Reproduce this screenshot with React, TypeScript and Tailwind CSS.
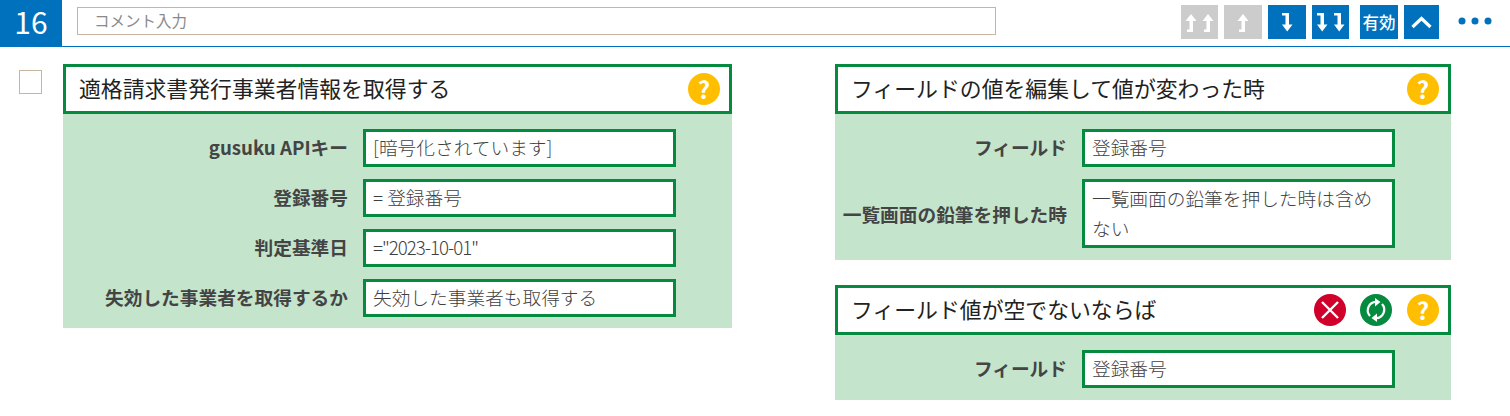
import React from 'react';

const FONT = "font-['Noto_Sans_CJK_JP','Noto_Sans',sans-serif]";

const UpArrow = ({ x = 0 }: { x?: number }) => (
  <path transform={`translate(${x} 0)`} fill="#fff" d="M6 1 L11.5 8 H8 V19 H2 V16.5 H4.5 V8 H0.5 Z" />
);

const DownArrow = ({ x = 0 }: { x?: number }) => (
  <path transform={`translate(${x} 0)`} fill="#fff" d="M0 0 H7 V11.5 H10.5 L5.2 18.5 L0 11.5 H3.5 V2.5 H0 Z" />
);

const ToolButton = ({ w, off, ml, children }: { w: string; off?: boolean; ml: string; children: React.ReactNode }) => (
  <div className={`flex h-[34px] items-center justify-center ${w} ${ml} ${off ? 'bg-[#cccccc]' : 'bg-[#0071bc]'}`}>
    {children}
  </div>
);

const Help = () => (
  <div className="flex h-8 w-8 items-center justify-center rounded-full bg-[#ffbf00] text-[24px] leading-none font-bold text-white">?</div>
);

const Field = ({ label, value, tall, labelW }: { label: string; value: React.ReactNode; tall?: boolean; labelW: string }) => (
  <div className="flex items-center">
    <div className={`shrink-0 text-right text-[18.7px] leading-[28px] font-bold text-[#444444] ${labelW} ${tall ? '' : 'pb-[2px]'}`}>{label}</div>
    <div
      className={`ml-[15px] w-[313px] border-[3px] border-[#068a3f] bg-white pr-2 pl-[7px] text-[18.7px] font-light text-[#3f3f3f] ${tall ? 'h-[69px] pt-px leading-[30px]' : 'h-[38px] leading-[30px]'}`}
    >
      {value}
    </div>
  </div>
);

const CardHeader = ({ title, children }: { title: string; children: React.ReactNode }) => (
  <div className="flex h-[50px] items-center justify-between border-[3px] border-[#068a3f] bg-white pr-[9px] pl-[13px]">
    <div className="pb-[2px] text-[21.85px] text-[#222222]">{title}</div>
    <div className="flex items-center">{children}</div>
  </div>
);

export default function App() {
  return (
    <div className={`h-[416px] w-[1510px] overflow-hidden bg-white ${FONT}`}>
      <header className="flex h-[47px] items-start border-b border-[#0071bc]">
        <div className="flex h-[46px] w-[62px] items-center justify-center bg-[#0071bc] pb-[3px] text-[30px] text-white">16</div>
        <div className="mt-[7px] ml-[15px] flex h-[28px] w-[919px] items-center border border-[#c8b59f] pb-px pl-[16px] text-[15.5px] text-[#8a8a8a]">コメント入力</div>
        <div className="mt-[5px] ml-[185px] flex items-center">
          <ToolButton w="w-[37px]" ml="ml-0" off>
            <svg width="29" height="19" viewBox="0 0 29 19"><UpArrow /><UpArrow x={17} /></svg>
          </ToolButton>
          <ToolButton w="w-[38px]" ml="ml-[6px]" off>
            <svg width="12" height="19" viewBox="0 0 12 19"><UpArrow /></svg>
          </ToolButton>
          <ToolButton w="w-[38px]" ml="ml-[6px]">
            <svg width="11" height="19" viewBox="0 0 11 19"><DownArrow /></svg>
          </ToolButton>
          <ToolButton w="w-[37px]" ml="ml-[6px]">
            <svg width="28" height="19" viewBox="0 0 28 19"><DownArrow /><DownArrow x={17} /></svg>
          </ToolButton>
          <ToolButton w="w-[38px]" ml="ml-[11px]">
            <span className="text-[16.5px] font-medium whitespace-nowrap text-white">有効</span>
          </ToolButton>
          <ToolButton w="w-[35px]" ml="ml-[6px]">
            <svg width="21" height="13" viewBox="0 0 21 13">
              <path d="M1.5 11 L10.5 2.5 L19.5 11" fill="none" stroke="#fff" strokeWidth="3.2" />
            </svg>
          </ToolButton>
          <svg className="mb-[2px] ml-[19px]" width="34" height="8" viewBox="0 0 34 8">
            <circle cx="4" cy="4" r="3.5" fill="#0071bc" />
            <circle cx="17" cy="4" r="3.5" fill="#0071bc" />
            <circle cx="30" cy="4" r="3.5" fill="#0071bc" />
          </svg>
        </div>
      </header>

      <main className="flex pt-[17px]">
        <div className="mt-[6px] ml-[19px] h-[24px] w-[23px] border border-[#c8b59f] bg-white" />
        <section className="ml-[21px] w-[669px]">
          <CardHeader title="適格請求書発行事業者情報を取得する">
            <Help />
          </CardHeader>
          <div className="flex flex-col gap-[12px] bg-[#c4e4cc] pt-[15px] pb-[11px]">
            <Field labelW="w-[285px]" label="gusuku APIキー" value="[暗号化されています]" />
            <Field labelW="w-[285px]" label="登録番号" value="= 登録番号" />
            <Field labelW="w-[285px]" label="判定基準日" value={<span className="tracking-[-1px]">="2023-10-01"</span>} />
            <Field labelW="w-[285px]" label="失効した事業者を取得するか" value="失効した事業者も取得する" />
          </div>
        </section>

        <div className="ml-[103px] flex w-[616px] flex-col gap-[25px]">
          <section>
            <CardHeader title="フィールドの値を編集して値が変わった時">
              <Help />
            </CardHeader>
            <div className="flex flex-col gap-[12px] bg-[#c4e4cc] pt-[15px] pb-[12px]">
              <Field labelW="w-[232px]" label="フィールド" value="登録番号" />
              <Field labelW="w-[232px]" label="一覧画面の鉛筆を押した時" value="一覧画面の鉛筆を押した時は含めない" tall />
            </div>
          </section>
          <section>
            <CardHeader title="フィールド値が空でないならば">
              <div className="flex h-8 w-8 items-center justify-center rounded-full bg-[#d0002a]">
                <svg width="20" height="20" viewBox="0 0 20 20">
                  <path d="M2 2 L18 18 M18 2 L2 18" stroke="#fff" strokeWidth="2.4" />
                </svg>
              </div>
              <div className="ml-[14px] flex h-8 w-8 items-center justify-center rounded-full bg-[#068a3f]">
                <svg width="22" height="24" viewBox="0 0 22 24" fill="none">
                  <path d="M5 18 A8.5 8.5 0 0 1 11 3.8" stroke="#fff" strokeWidth="2.2" />
                  <path d="M10 0 L15.5 4 L10 8.5 Z" fill="#fff" />
                  <path d="M17 6 A8.5 8.5 0 0 1 11 20.2" stroke="#fff" strokeWidth="2.2" />
                  <path d="M12 15.5 L6.5 20 L12 24 Z" fill="#fff" />
                </svg>
              </div>
              <div className="ml-[15px]"><Help /></div>
            </CardHeader>
            <div className="bg-[#c4e4cc] pt-[15px] pb-[12px]">
              <Field labelW="w-[232px]" label="フィールド" value="登録番号" />
            </div>
          </section>
        </div>
      </main>
    </div>
  );
}
